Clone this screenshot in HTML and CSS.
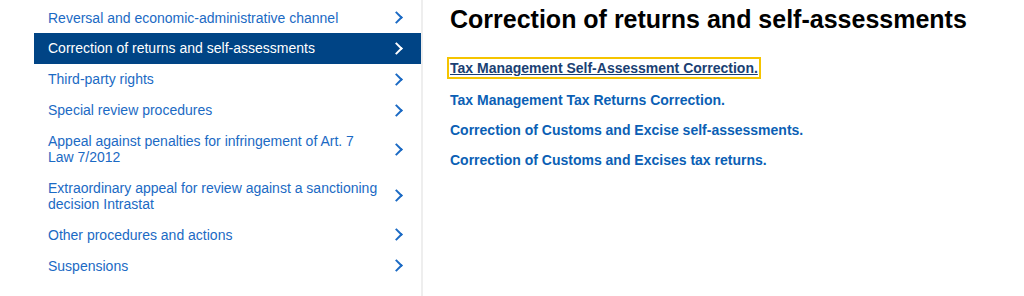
FILE: index.html
```html
<!DOCTYPE html>
<html lang="en">
<head>
    <meta charset="UTF-8">
    <title>Correction of returns and self-assessments</title>
    <link rel="stylesheet" href="styles.css">
</head>
<body>
    <div class="page">
        <div class="sidebar">
            <a class="option" href="#"><span class="label">Reversal and economic-administrative channel</span><span class="icon"></span></a>
            <a class="option active" href="#"><span class="label">Correction of returns and self-assessments</span><span class="icon"></span></a>
            <a class="option" href="#"><span class="label">Third-party rights</span><span class="icon"></span></a>
            <a class="option" href="#"><span class="label">Special review procedures</span><span class="icon"></span></a>
            <a class="option" href="#"><span class="label">Appeal against penalties for infringement of Art. 7 Law 7/2012</span><span class="icon"></span></a>
            <a class="option" href="#"><span class="label">Extraordinary appeal for review against a sanctioning decision Intrastat</span><span class="icon"></span></a>
            <a class="option" href="#"><span class="label">Other procedures and actions</span><span class="icon"></span></a>
            <a class="option" href="#"><span class="label">Suspensions</span><span class="icon"></span></a>
        </div>

        <div class="main">
            <h1>Correction of returns and self-assessments</h1>
            <ul class="links">
                <li class="first"><a class="focused" href="#">Tax Management Self-Assessment Correction.</a></li>
                <li><a href="#">Tax Management Tax Returns Correction.</a></li>
                <li><a href="#">Correction of Customs and Excise self-assessments.</a></li>
                <li><a href="#">Correction of Customs and Excises tax returns.</a></li>
            </ul>
        </div>
    </div>
</body>
</html>
```

FILE: styles.css
```css
body {
    margin: 0;
    background-color: #fff;
    font-family: 'Liberation Sans', Arial, sans-serif;
    color: #000;
}

.page {
    display: flex;
    padding-left: 34px;
    height: 296px;
}

.sidebar {
    width: 387px;
    flex-shrink: 0;
    border-right: 2px solid #eeeeee;
    padding-top: 2px;
}

.option {
    display: flex;
    align-items: center;
    justify-content: space-between;
    padding: 7.5px 14px 7.4px;
    font-size: 14px;
    line-height: 16px;
    color: #1b6ac4;
    text-decoration: none;
}

.option .label {
    max-width: 332px;
}

.option .icon {
    width: 7px;
    height: 7px;
    border-top: 2px solid #1b6ac4;
    border-right: 2px solid #1b6ac4;
    transform: rotate(45deg);
    margin-right: 6px;
    flex-shrink: 0;
}

.option.active {
    background-color: #004485;
    color: #fff;
}

.option.active .icon {
    border-color: #fff;
}

.main {
    padding-left: 27px;
}

.main h1 {
    margin: 4px 0 0;
    font-size: 25px;
    line-height: 30px;
    font-weight: bold;
}

.links {
    list-style: none;
    margin: 25px 0 0;
    padding: 0;
}

.links li {
    height: 30px;
}

.links li.first {
    height: 32px;
}

.links a {
    font-size: 14px;
    line-height: 16px;
    font-weight: bold;
    color: #0b5fb5;
    text-decoration: none;
}

.links a.focused {
    color: #1a3f73;
    text-decoration: underline;
    outline: 2px solid #f5c400;
    outline-offset: 1px;
}
```
